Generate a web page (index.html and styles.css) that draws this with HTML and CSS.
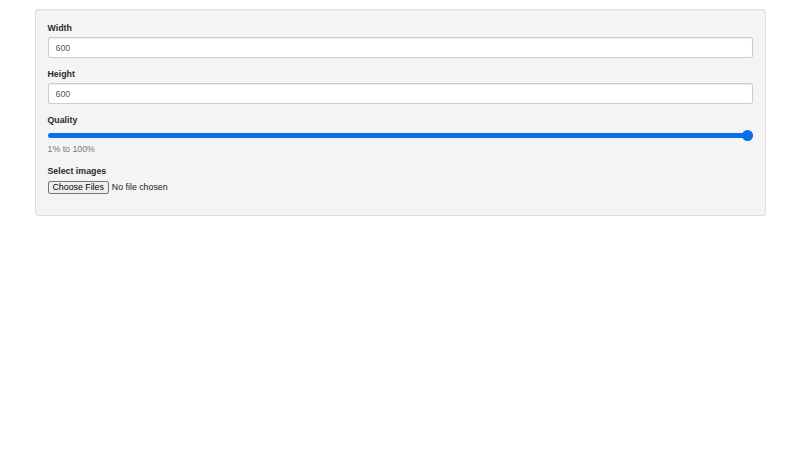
FILE: index.html
```html
<!DOCTYPE html>
<html>
<head>
<meta charset="utf-8">
<link rel="stylesheet" href="styles.css">
</head>
<body>
<div class="well">
  <div class="group">
    <label class="lbl" for="w">Width</label>
    <input class="field" id="w" type="text" value="600">
  </div>
  <div class="group">
    <label class="lbl" for="h">Height</label>
    <input class="field" id="h" type="text" value="600">
  </div>
  <div class="group">
    <label class="lbl" for="q">Quality</label>
    <input class="range" id="q" type="range" min="1" max="100" value="100">
    <p class="help">1% to 100%</p>
  </div>
  <div class="group last">
    <label class="lbl" for="f">Select images</label>
    <input class="file" id="f" type="file" multiple>
  </div>
</div>
</body>
</html>
```
FILE: styles.css
```css
html, body {
  margin: 0;
  padding: 0;
  background: #fff;
}
body {
  font-family: "Liberation Sans", Arial, Helvetica, sans-serif;
  font-size: 8.8px;
  color: #333;
}
.well {
  box-sizing: border-box;
  width: 731px;
  margin: 9px auto 0;
  padding: 12px 12px 21px;
  background: #f4f4f4;
  border: 1px solid #dedede;
  border-radius: 3px;
  box-shadow: inset 0 1px 1px rgba(0,0,0,0.03);
}
.group {
  display: flex;
  flex-direction: column;
  align-items: flex-start;
  margin-bottom: 10px;
}
.group.last {
  margin-bottom: 0;
}
.lbl {
  display: block;
  font-weight: bold;
  font-size: 8.8px;
  line-height: 12px;
  margin-bottom: 3px;
  color: #2b2b2b;
}
.field {
  box-sizing: border-box;
  width: 100%;
  height: 21px;
  margin: 0;
  padding: 0 7px;
  font-family: inherit;
  font-size: 8.8px;
  color: #555;
  background: #fff;
  border: 1px solid #ccc;
  border-radius: 2px;
  box-shadow: inset 0 1px 1px rgba(0,0,0,0.075);
  outline: none;
}
.range {
  -webkit-appearance: none;
  appearance: none;
  display: block;
  width: 100%;
  height: 12px;
  margin: 0;
  padding: 0;
  background: transparent;
}
.range::-webkit-slider-runnable-track {
  height: 5px;
  background: #0d6fe6;
  border-radius: 3px;
}
.range::-webkit-slider-thumb {
  -webkit-appearance: none;
  appearance: none;
  width: 11px;
  height: 11px;
  margin-top: -3px;
  border-radius: 50%;
  background: #0d6fe6;
  border: none;
}
.help {
  margin: 2px 0 0;
  font-size: 8.8px;
  line-height: 12px;
  color: #777;
}
.file {
  font-family: inherit;
  font-size: 8.8px;
  color: #222;
  margin: 1px 0 0;
  line-height: 13px;
}
.file::file-selector-button {
  font-family: inherit;
  font-size: 8.8px;
  line-height: 11px;
  padding: 0 4px;
  margin: 0 3px 0 0;
  color: #000;
  background: #efefef;
  border: 1px solid #767676;
  border-radius: 2px;
}
```
